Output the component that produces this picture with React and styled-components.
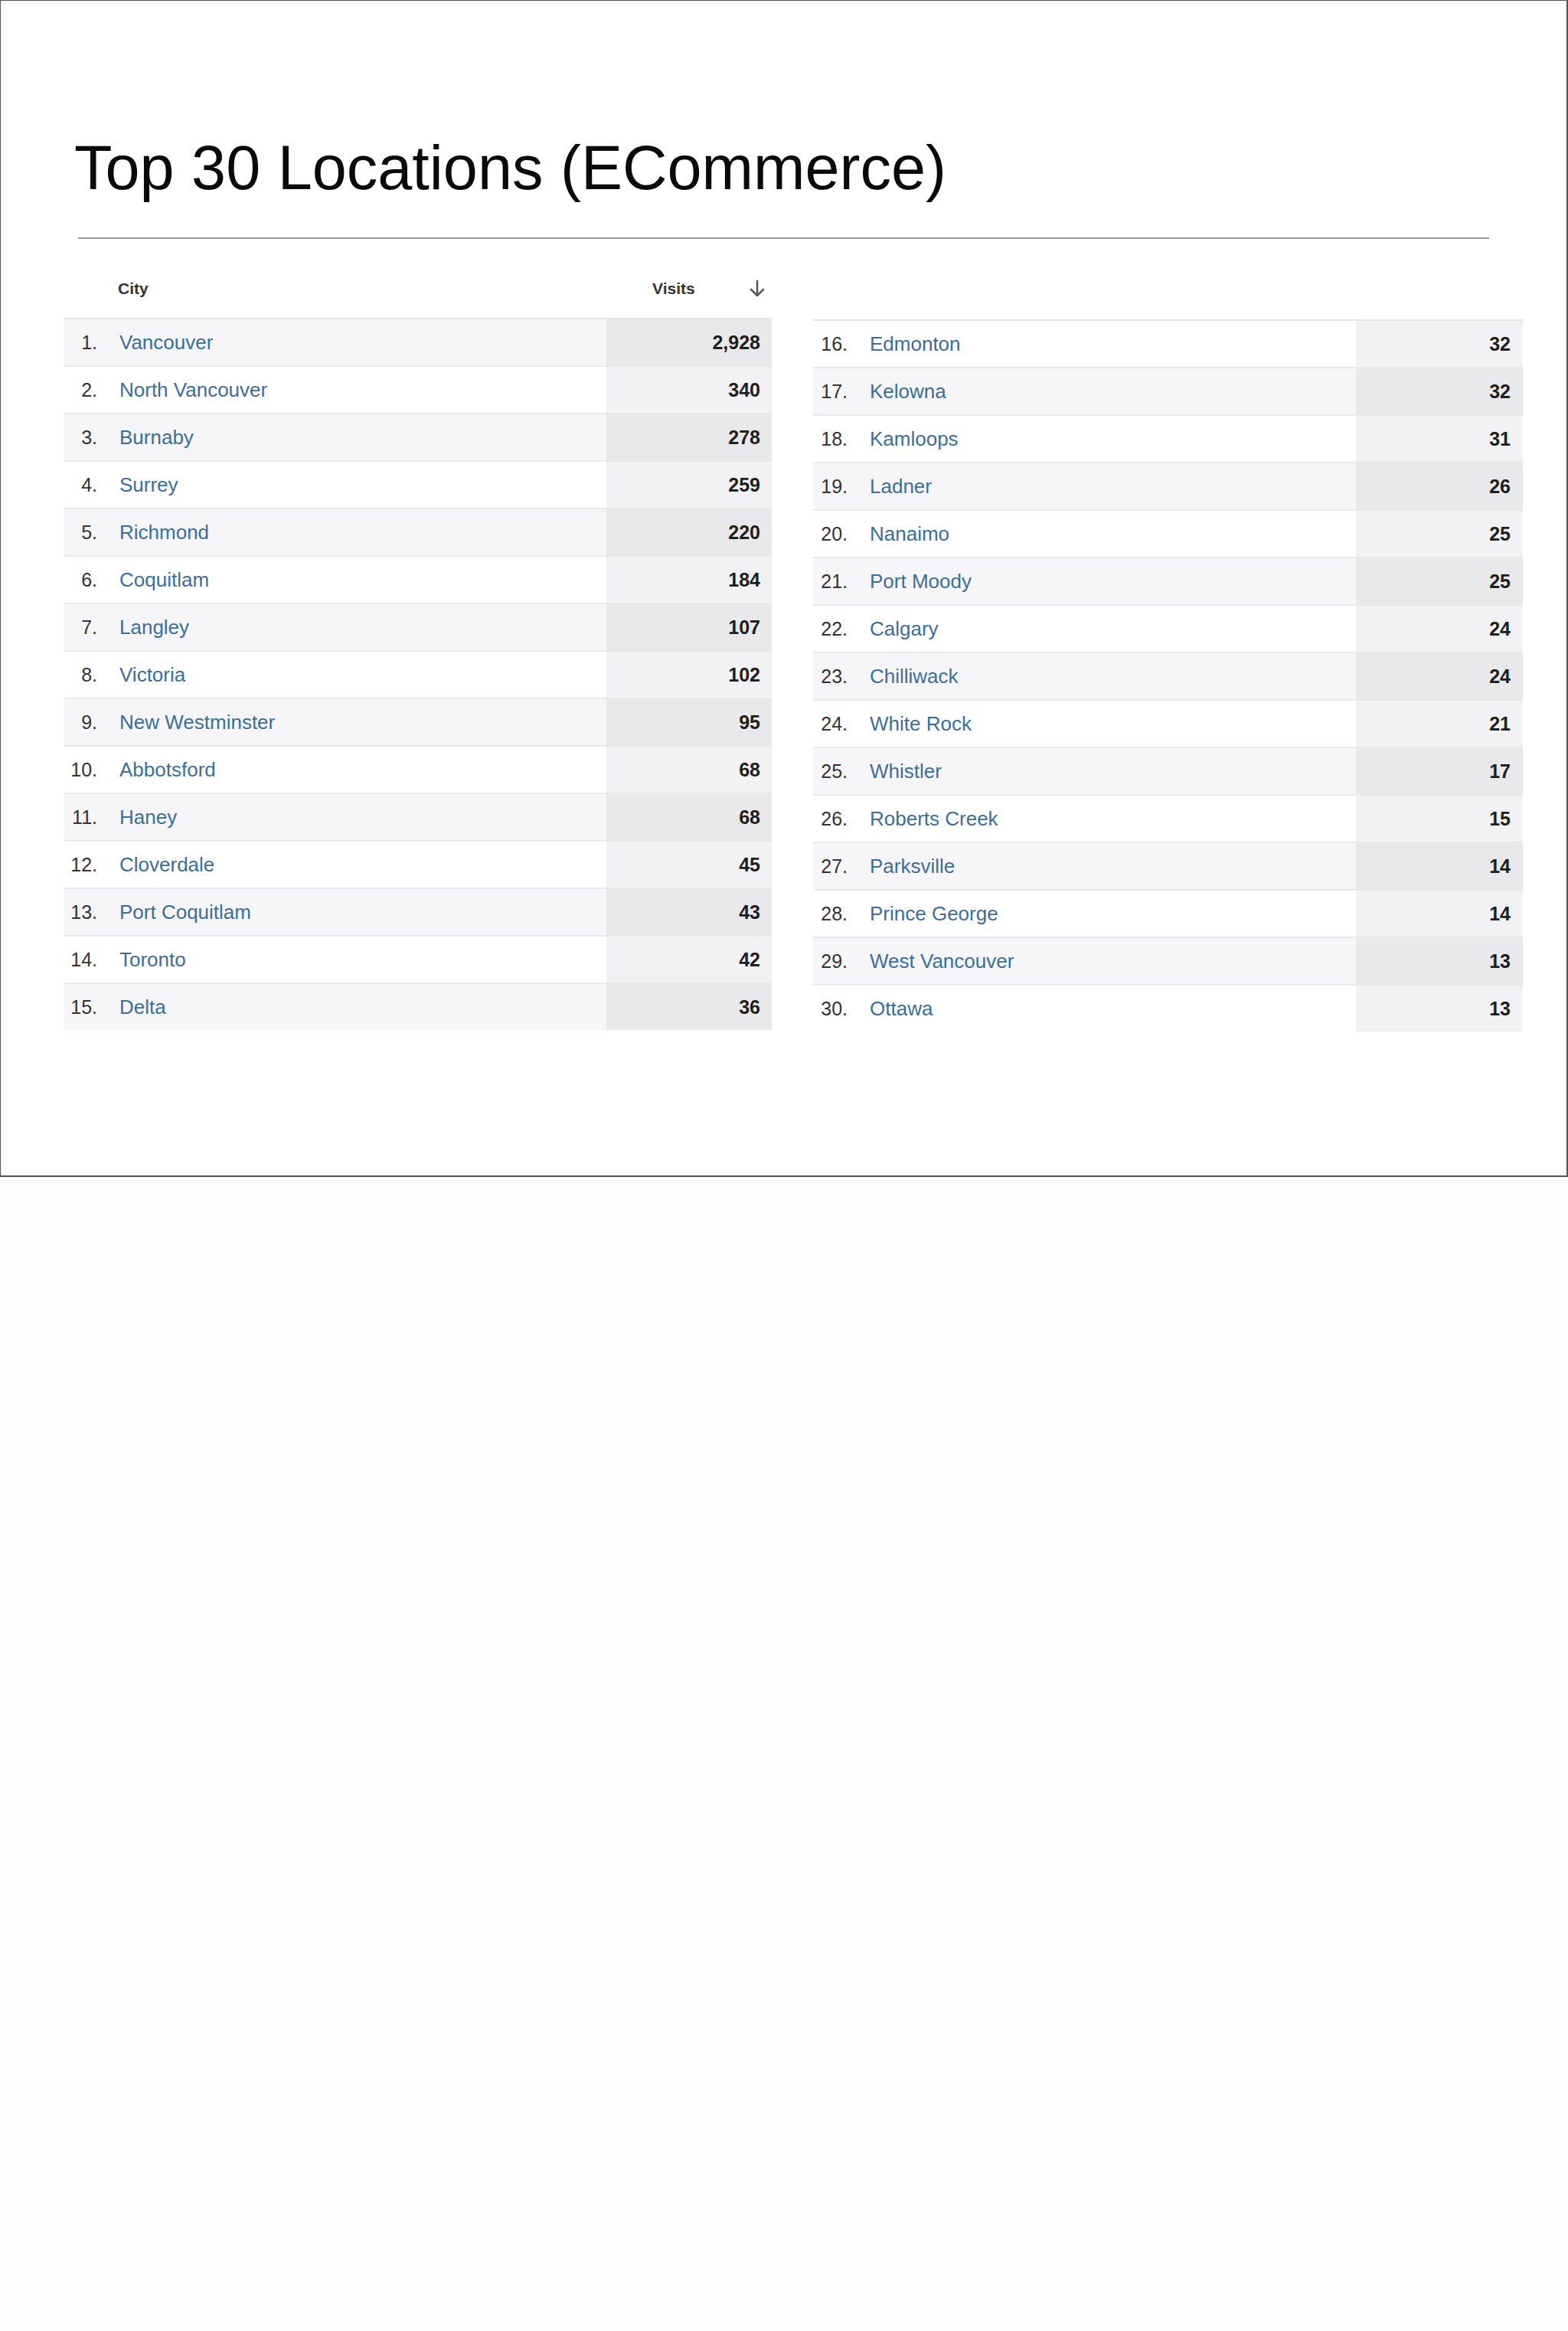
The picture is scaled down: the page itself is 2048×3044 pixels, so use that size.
import React from "react";
import styled, { createGlobalStyle } from "styled-components";

const GlobalStyle = createGlobalStyle`
  html, body {
    margin: 0;
    padding: 0;
    background: #fdfdfd;
  }
  body {
    font-family: "Liberation Sans", Arial, Helvetica, sans-serif;
  }
`;

const Slide = styled.div`
  box-sizing: border-box;
  width: 2048px;
  height: 1537px;
  background: #ffffff;
  border-top: 1px solid #555;
  border-left: 1px solid #555;
  border-right: 2px solid #555;
  border-bottom: 2px solid #555;
  padding-top: 178px;
`;

const Title = styled.h1`
  margin: 0 0 0 96px;
  font-family: "Liberation Sans", Arial, Helvetica, sans-serif;
  font-weight: 400;
  font-size: 81px;
  line-height: 80px;
  color: #0a0a0a;
  letter-spacing: 0;
`;

const Rule = styled.div`
  margin: 51px 0 0 101px;
  width: 1843px;
  height: 2px;
  background: #9b9b9b;
`;

const Tables = styled.div`
  display: flex;
  align-items: flex-start;
  gap: 54px;
  margin-left: 83px;
`;

const Table = styled.div`
  width: ${(p) => p.$width}px;
  margin-top: ${(p) => p.$offset}px;
  display: flex;
  flex-direction: column;
`;

const HeaderRow = styled.div`
  height: 103px;
  box-sizing: border-box;
  padding-top: 53px;
  display: flex;
  align-items: flex-start;
  font-weight: 700;
  font-size: 21px;
  line-height: 24px;
  color: #333;
`;

const HeaderCity = styled.div`
  flex: 1;
  padding-left: 70px;
`;

const HeaderVisits = styled.div`
  width: ${(p) => p.$width}px;
  box-sizing: border-box;
  padding-left: 60px;
  display: flex;
  align-items: center;
`;

const SortArrow = styled.svg`
  margin-left: 70px;
  width: 22px;
  height: 24px;
  display: block;
`;

const Row = styled.div`
  display: flex;
  height: 62px;
  box-sizing: border-box;
  border-top: 2px solid ${(p) => (p.$first ? "#e4e4e6" : "#e9e9eb")};
`;

const NameCell = styled.div`
  flex: 1;
  display: flex;
  align-items: center;
  background: ${(p) => (p.$shaded ? "#f6f6f8" : "#ffffff")};
`;

const Index = styled.span`
  width: ${(p) => p.$width}px;
  text-align: right;
  font-size: 25px;
  color: #333;
`;

const CityLink = styled.span`
  margin-left: 29px;
  font-size: 26px;
  color: #3a6e9c;
`;

const VisitsCell = styled.div`
  width: ${(p) => p.$width}px;
  box-sizing: border-box;
  padding-right: ${(p) => p.$pad}px;
  display: flex;
  align-items: center;
  justify-content: flex-end;
  background: ${(p) => (p.$shaded ? "#e9e9eb" : "#f2f2f4")};
  font-size: 25px;
  font-weight: 700;
  color: #1e1e1e;
`;

const left = [
  ["Vancouver", "2,928"],
  ["North Vancouver", "340"],
  ["Burnaby", "278"],
  ["Surrey", "259"],
  ["Richmond", "220"],
  ["Coquitlam", "184"],
  ["Langley", "107"],
  ["Victoria", "102"],
  ["New Westminster", "95"],
  ["Abbotsford", "68"],
  ["Haney", "68"],
  ["Cloverdale", "45"],
  ["Port Coquitlam", "43"],
  ["Toronto", "42"],
  ["Delta", "36"],
];

const right = [
  ["Edmonton", "32"],
  ["Kelowna", "32"],
  ["Kamloops", "31"],
  ["Ladner", "26"],
  ["Nanaimo", "25"],
  ["Port Moody", "25"],
  ["Calgary", "24"],
  ["Chilliwack", "24"],
  ["White Rock", "21"],
  ["Whistler", "17"],
  ["Roberts Creek", "15"],
  ["Parksville", "14"],
  ["Prince George", "14"],
  ["West Vancouver", "13"],
  ["Ottawa", "13"],
];

function DataTable({ rows, start, width, visitsWidth, indexWidth, numPad, header, offset }) {
  return (
    <Table $width={width} $offset={offset}>
      <HeaderRow>
        {header ? (
          <>
            <HeaderCity>City</HeaderCity>
            <HeaderVisits $width={visitsWidth}>
              Visits
              <SortArrow viewBox="0 0 22 24">
                <path
                  d="M11 2 V21 M3 13 L11 21 L19 13"
                  fill="none"
                  stroke="#5a5a5a"
                  strokeWidth="2.6"
                  strokeLinecap="round"
                  strokeLinejoin="round"
                />
              </SortArrow>
            </HeaderVisits>
          </>
        ) : null}
      </HeaderRow>
      {rows.map(([city, visits], i) => {
        const n = start + i;
        const shaded = n % 2 === 1;
        return (
          <Row key={city} $first={i === 0}>
            <NameCell $shaded={shaded}>
              <Index $width={indexWidth}>{n}.</Index>
              <CityLink>{city}</CityLink>
            </NameCell>
            <VisitsCell $width={visitsWidth} $pad={numPad} $shaded={shaded}>
              {visits}
            </VisitsCell>
          </Row>
        );
      })}
    </Table>
  );
}

export default function App() {
  return (
    <>
      <GlobalStyle />
      <Slide>
        <Title>Top 30 Locations (ECommerce)</Title>
        <Rule />
        <Tables>
          <DataTable
            rows={left}
            start={1}
            width={924}
            visitsWidth={216}
            indexWidth={43}
            numPad={15}
            header
            offset={0}
          />
          <DataTable
            rows={right}
            start={16}
            width={927}
            visitsWidth={218}
            indexWidth={45}
            numPad={16}
            header={false}
            offset={2}
          />
        </Tables>
      </Slide>
    </>
  );
}
